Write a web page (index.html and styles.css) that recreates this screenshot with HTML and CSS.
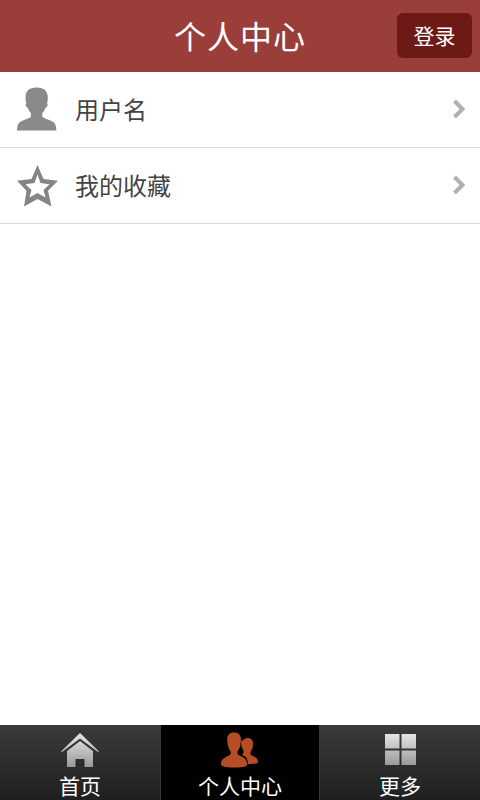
FILE: index.html
```html
<!DOCTYPE html>
<html lang="zh">
<head>
<meta charset="utf-8">
<title>个人中心</title>
<link rel="stylesheet" href="styles.css">
</head>
<body>
<div class="app">
  <header class="header">
    <h1 class="title">个人中心</h1>
    <button class="login">登录</button>
  </header>
  <main class="list">
    <div class="row">
      <svg class="row-icon" viewBox="0 0 44 48"><path fill="#8a8a8a" d="M22 1.500c6.800 0 10.800 3.500 10.800 10 0 2.500-.3 4.500-.8 6 .9.300.8 2-.1 3.300-.4.600-.9 1-1.400 1-.7 2.300-1.700 4-3.200 5.200v3.500c.9 1.300 3.500 2.200 6.300 3.200 4.300 1.500 6.700 3.300 7.200 6.300l.7 4.500H1.800l.7-4.500c.5-3 2.900-4.800 7.200-6.300 2.800-1 5.400-1.900 6.300-3.200V27c-1.500-1.200-2.500-2.900-3.200-5.200-.5 0-1-.4-1.400-1-.9-1.300-1-3-.1-3.300-.5-1.500-.8-3.500-.8-6 0-6.500 4-10 10.500-10z"/></svg>
      <span class="row-text">用户名</span>
      <svg class="chevron" viewBox="0 0 14 20"><path fill="none" stroke="#b0b0b0" stroke-width="4" d="M2.500 2l8 8-8 8"/></svg>
    </div>
    <div class="row">
      <svg class="row-icon" viewBox="0 0 44 48"><path fill="#858585" fill-rule="evenodd" d="M22.500 3L28.500 17l14.500 1.800-10 10L36.500 44.500l-14-7.500L9 44.500l2.500-15.700L2 18.800 16.500 17zM22.500 12.500l-3 8.500-9 1.300 6 5.700-2 7.500 8-4.500 8 4.500-2-7.500 6-5.700-9-1.300z"/></svg>
      <span class="row-text">我的收藏</span>
      <svg class="chevron" viewBox="0 0 14 20"><path fill="none" stroke="#b0b0b0" stroke-width="4" d="M2.500 2l8 8-8 8"/></svg>
    </div>
  </main>
  <nav class="tabbar">
    <div class="tab">
      <svg class="tab-icon" viewBox="0 0 40 36">
        <defs><linearGradient id="g1" x1="0" y1="0" x2="0" y2="1"><stop offset="0" stop-color="#e8e8e8"/><stop offset="1" stop-color="#999"/></linearGradient></defs>
        <path fill="url(#g1)" fill-rule="evenodd" d="M20 1L39 19.500l-1 .5L20 6.500 2 20l-1-.5zM20 9l13 10v16H24.500v-8h-9v8H7V19z"/>
      </svg>
      <span class="tab-text">首页</span>
    </div>
    <div class="tab active">
      <svg class="tab-icon" viewBox="0 0 40 36"><path fill="#b54e24" d="M28 6c3 0 5 2.200 5 5.500 0 1.500-.2 2.600-.5 3.300.4.300.3 1.200-.2 1.800-.5 1.600-1.200 2.800-1.800 3.500v2.400c.7 1 2.500 1.500 4.500 2.500 2 1.100 3 2.400 3 5.500 0 .8-2.500 1.400-8.500 1.400-1 0-1.500 0-2 0 .5-4-.5-6.500-4-8.500-.5-.3-1-.5-1.500-.7.500-.8 1.200-1 1.500-2v-2.400c-.6-.7-1.300-1.900-1.800-3.500-.5-.6-.6-1.500-.2-1.800-.3-.7-.5-1.800-.5-3.300C23 8.200 25 6 28 6z"/><path fill="#b54e24" d="M14.500.500c4 0 6.500 2.700 6.500 7 0 2-.3 3.500-.8 4.500.6.300.5 1.500-.2 2.500-.8 2.500-1.700 4-2.500 5v2.500c.8 1.200 3 2 5 3 3 1.400 4.500 3.500 4.500 8 0 1-2.500 2.500-13 2.500s-13-1.500-13-3c0-4 1.500-6 5-7.500 2-.9 4-1.800 4.800-3v-2.500c-1-1-1.800-2.500-2.600-5-.7-1-.8-2.200-.2-2.500-.5-1-.8-2.500-.8-4.500 0-4.300 2.300-7 6.300-7z"/></svg>
      <span class="tab-text">个人中心</span>
    </div>
    <div class="tab">
      <svg class="tab-icon" viewBox="0 0 40 36">
        <defs><linearGradient id="g2" x1="0" y1="0" x2="0" y2="1"><stop offset="0" stop-color="#e4e4e4"/><stop offset="1" stop-color="#9a9a9a"/></linearGradient></defs>
        <path fill="url(#g2)" d="M5 2h14.500v14.500H5zM21.500 2H36v14.500H21.500zM5 18.500h14.500V33H5zM21.500 18.500H36V33H21.500z"/>
      </svg>
      <span class="tab-text">更多</span>
    </div>
  </nav>
</div>
</body>
</html>
```

FILE: styles.css
```css
* { box-sizing: border-box; }
html, body { margin: 0; padding: 0; }
body {
  font-family: "Noto Sans CJK SC", "Liberation Sans", sans-serif;
  background: #fff;
}
.app {
  width: 480px;
  height: 800px;
  display: flex;
  flex-direction: column;
  overflow: hidden;
}
.header {
  height: 72px;
  flex: none;
  background: #993e38;
  display: flex;
  align-items: center;
  justify-content: center;
  position: relative;
}
.title {
  margin: 0;
  padding-bottom: 2px;
  font-size: 32px;
  font-weight: 400;
  letter-spacing: 1px;
  color: #fff;
  line-height: 70px;
}
.login {
  position: absolute;
  right: 8px;
  top: 13px;
  width: 75px;
  height: 45px;
  padding: 0;
  border: 0;
  border-radius: 6px;
  background: #6d1a17;
  color: #fff;
  font-family: inherit;
  font-size: 21px;
  line-height: 45px;
}
.list { flex: 1; }
.row {
  height: 76px;
  border-bottom: 1px solid #d8d8d8;
  display: flex;
  align-items: center;
  padding: 0 14px 0 15px;
}
.row-icon {
  width: 44px;
  height: 48px;
  flex: none;
}
.row-text {
  margin-left: 16px;
  padding-bottom: 2px;
  font-size: 24px;
  color: #444;
  flex: 1;
}
.chevron {
  width: 14px;
  height: 20px;
  flex: none;
  margin-bottom: 2px;
}
.tabbar {
  height: 75px;
  flex: none;
  display: flex;
  background: linear-gradient(#3b3b3b, #1f1f1f);
}
.tab {
  flex: 1;
  display: flex;
  flex-direction: column;
  align-items: center;
  padding-top: 7px;
  overflow: hidden;
}
.tab.active {
  background: #000;
  border-left: 1px solid #3a3a3a;
  border-right: 1px solid #3a3a3a;
  flex: none;
  width: 160px;
}
.tab-icon {
  width: 40px;
  height: 36px;
  flex: none;
}
.tab-text {
  margin-top: 3px;
  font-size: 21px;
  line-height: 28px;
  color: #fff;
}
```
